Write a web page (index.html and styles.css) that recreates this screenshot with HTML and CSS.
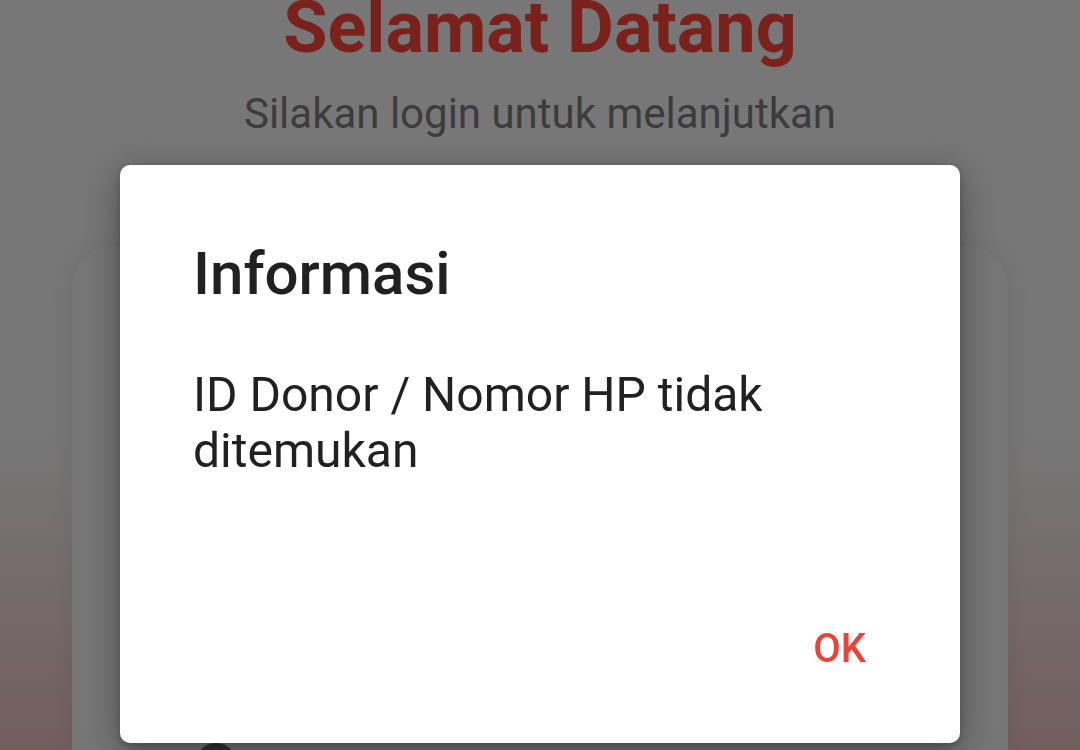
FILE: index.html
```html
<!DOCTYPE html>
<html lang="id">
<head>
<meta charset="utf-8">
<title>Login</title>
<link rel="stylesheet" href="styles.css">
</head>
<body>
<div class="page">
  <h1 class="welcome">Selamat Datang</h1>
  <p class="subtitle">Silakan login untuk melanjutkan</p>
  <div class="card">
    <div class="card-icon"></div>
  </div>
</div>
<div class="scrim">
  <div class="dialog" role="dialog">
    <h2 class="dialog-title">Informasi</h2>
    <p class="dialog-body">ID Donor / Nomor HP tidak ditemukan</p>
    <div class="dialog-actions">
      <button class="dialog-btn">OK</button>
    </div>
  </div>
</div>
</body>
</html>
```

FILE: styles.css
```css
* { box-sizing: border-box; }
html, body {
  margin: 0;
  height: 100%;
  overflow: hidden;
}
body {
  font-family: Roboto, "Noto Sans", sans-serif;
  background: linear-gradient(to bottom, #eeeeee 0%, #eeeeee 58%, #e6bcbc 100%);
}
.page {
  display: flex;
  flex-direction: column;
  align-items: center;
  height: 750px;
}
.welcome {
  margin: -14px 0 0;
  font-size: 72px;
  line-height: 84px;
  font-weight: 700;
  color: #f44336;
}
.subtitle {
  margin: 20px 0 0;
  font-size: 42px;
  line-height: 48px;
  color: #787878;
}
.card {
  margin-top: 107px;
  width: 936px;
  flex: 1;
  background: #ececec;
  border-radius: 44px 44px 0 0;
  box-shadow: 0 0 24px rgba(0, 0, 0, 0.08);
  padding: 498px 0 0 123px;
}
.card-icon {
  width: 42px;
  height: 42px;
  border-radius: 50%;
  background: #666666;
}
.scrim {
  position: fixed;
  inset: 0;
  background: rgba(0, 0, 0, 0.5);
  display: flex;
  justify-content: center;
  align-items: flex-start;
  padding-top: 165px;
}
.dialog {
  width: 840px;
  background: #ffffff;
  border-radius: 10px;
  padding: 74px 94px 70px 73px;
  box-shadow: 0 8px 36px rgba(0, 0, 0, 0.35), 0 4px 10px rgba(0, 0, 0, 0.2);
}
.dialog-title {
  margin: 0;
  font-size: 60px;
  line-height: 70px;
  font-weight: 500;
  color: #212121;
}
.dialog-body {
  margin: 58px 0 0;
  font-size: 48px;
  line-height: 56px;
  font-weight: 400;
  color: #212121;
}
.dialog-actions {
  display: flex;
  justify-content: flex-end;
  margin-top: 146px;
}
.dialog-btn {
  border: 0;
  background: none;
  padding: 0;
  font-family: Roboto, "Noto Sans", sans-serif;
  font-size: 40px;
  line-height: 48px;
  font-weight: 500;
  color: #e9443a;
}
```
